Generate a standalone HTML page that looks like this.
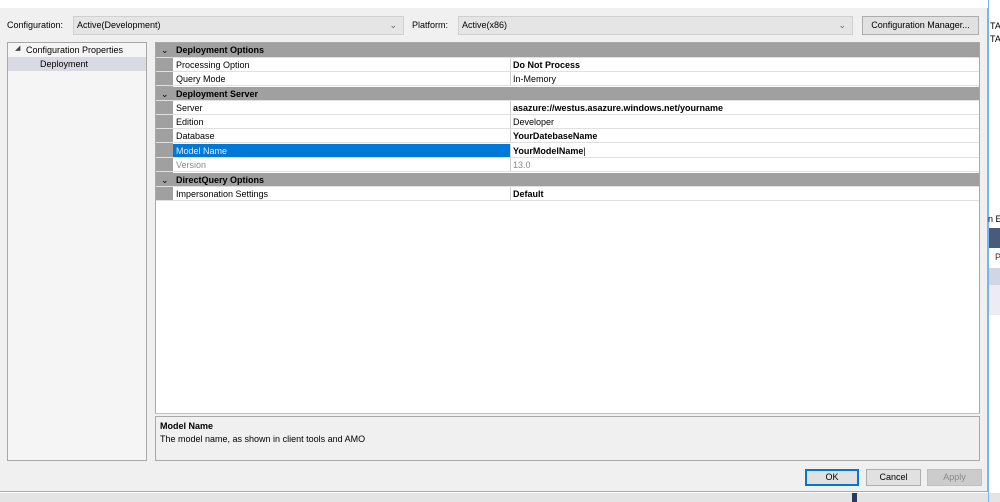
<!DOCTYPE html>
<html><head><style>
*{box-sizing:border-box;margin:0;padding:0}
body{width:1000px;height:502px;overflow:hidden;background:#fff;font-family:"Liberation Sans",sans-serif;font-size:9px;color:#000;position:relative}
.a{position:absolute;white-space:nowrap}
.combo{background:#e5e5e5;border:1px solid #d0d0d0;height:19px;padding:0 3px;line-height:17px;font-size:9px}
.btn{background:#e1e1e1;border:1px solid #adadad;text-align:center;font-size:9px;line-height:15px}
.row{position:absolute;left:0;right:0;height:14.3px;border-bottom:1px solid #e0e0e0;line-height:14px}
.hdr{background:#a0a0a0;font-weight:bold}
.n{position:absolute;left:17px;width:338px;padding-left:3px;background:#fff;height:100%;border-right:1px solid #d0d0d0}
.v{position:absolute;left:355px;right:0;padding-left:2px;height:100%;background:#fff}
</style></head><body>
<div class="a" style="left:0;top:0;width:988px;height:8px;background:#fff"></div>
<div class="a" style="left:0;top:8px;width:988px;height:484px;background:#f0f0f0;border-right:1px solid #7ab4f0;border-bottom:1px solid #7ab4f0"></div>
<div class="a" style="left:0;top:493px;width:1000px;height:9px;background:#e4e4e4"></div>
<div class="a" style="left:852px;top:493px;width:5px;height:9px;background:#2b3a5a"></div>
<div class="a" style="left:988px;top:0;width:1px;height:502px;background:#7ab4f0"></div>
<div class="a" style="left:990px;top:21px;font-size:9px">TA</div>
<div class="a" style="left:990px;top:34px;font-size:9px">TA</div>
<div class="a" style="left:988px;top:214px;font-size:9px">n E</div>
<div class="a" style="left:989px;top:228px;width:11px;height:20px;background:#4a5a7c"></div>
<div class="a" style="left:995px;top:252px;font-size:9px;color:#5a1a1a">P</div>
<div class="a" style="left:989px;top:268px;width:11px;height:17px;background:#d0d6e4"></div>
<div class="a" style="left:989px;top:285px;width:11px;height:30px;background:#ececf2"></div>

<div class="a" style="left:7px;top:20px">Configuration:</div>
<div class="a combo" style="left:73px;top:16px;width:331px">Active(Development)<span style="position:absolute;right:6px;top:0;color:#666">&#8964;</span></div>
<div class="a" style="left:412px;top:20px">Platform:</div>
<div class="a combo" style="left:458px;top:16px;width:395px">Active(x86)<span style="position:absolute;right:6px;top:0;color:#666">&#8964;</span></div>
<div class="a btn" style="left:862px;top:16px;width:117px;height:19px;line-height:17px">Configuration Manager...</div>

<div class="a" style="left:7px;top:42px;width:140px;height:419px;background:#f5f5f5;border:1px solid #a8a8a8"></div>
<div class="a" style="left:15px;top:44px;font-size:7px;color:#444">&#9698;</div>
<div class="a" style="left:26px;top:45px">Configuration Properties</div>
<div class="a" style="left:8px;top:57px;width:138px;height:14px;background:#d9d9e4"></div>
<div class="a" style="left:40px;top:59px">Deployment</div>

<div class="a" style="left:155px;top:42px;width:825px;height:372px;background:#fff;border:1px solid #a8a8a8;border-bottom:none">
 <div class="a" style="left:0;top:0;width:17px;height:158px;background:#a0a0a0"></div>
 <div class="row hdr" style="top:0;height:15px"><span style="position:absolute;left:5px;font-weight:normal">&#8964;</span><span style="position:absolute;left:20px">Deployment Options</span></div>
 <div class="row" style="top:15px"><div class="n">Processing Option</div><div class="v"><b>Do Not Process</b></div></div>
 <div class="row" style="top:29px"><div class="n">Query Mode</div><div class="v">In-Memory</div></div>
 <div class="row hdr" style="top:43.5px"><span style="position:absolute;left:5px;font-weight:normal">&#8964;</span><span style="position:absolute;left:20px">Deployment Server</span></div>
 <div class="row" style="top:58px"><div class="n">Server</div><div class="v"><b>asazure://westus.asazure.windows.net/yourname</b></div></div>
 <div class="row" style="top:72px"><div class="n">Edition</div><div class="v">Developer</div></div>
 <div class="row" style="top:86px"><div class="n">Database</div><div class="v"><b>YourDatebaseName</b></div></div>
 <div class="row" style="top:100.5px"><div class="n" style="background:#0078d7;color:#e8f0ff">Model Name</div><div class="v"><b>YourModelName</b>|</div></div>
 <div class="row" style="top:115px;color:#888"><div class="n">Version</div><div class="v">13.0</div></div>
 <div class="row hdr" style="top:129.5px"><span style="position:absolute;left:5px;font-weight:normal">&#8964;</span><span style="position:absolute;left:20px">DirectQuery Options</span></div>
 <div class="row" style="top:144px"><div class="n">Impersonation Settings</div><div class="v"><b>Default</b></div></div>
</div>
<div class="a" style="left:155px;top:413px;width:825px;height:1px;background:#c0c0c0"></div>
<div class="a" style="left:155px;top:416px;width:825px;height:45px;background:#f0f0f0;border:1px solid #a8a8a8;padding:3px 4px;line-height:13px">
<b>Model Name</b><br>The model name, as shown in client tools and AMO</div>

<div class="a btn" style="left:805px;top:469px;width:54px;height:17px;border:1px solid #0078d7;box-shadow:inset 0 0 0 1px #0078d7">OK</div>
<div class="a btn" style="left:866px;top:469px;width:55px;height:17px">Cancel</div>
<div class="a btn" style="left:927px;top:469px;width:55px;height:17px;background:#ccc;border-color:#bfbfbf;color:#888">Apply</div>
</body></html>
